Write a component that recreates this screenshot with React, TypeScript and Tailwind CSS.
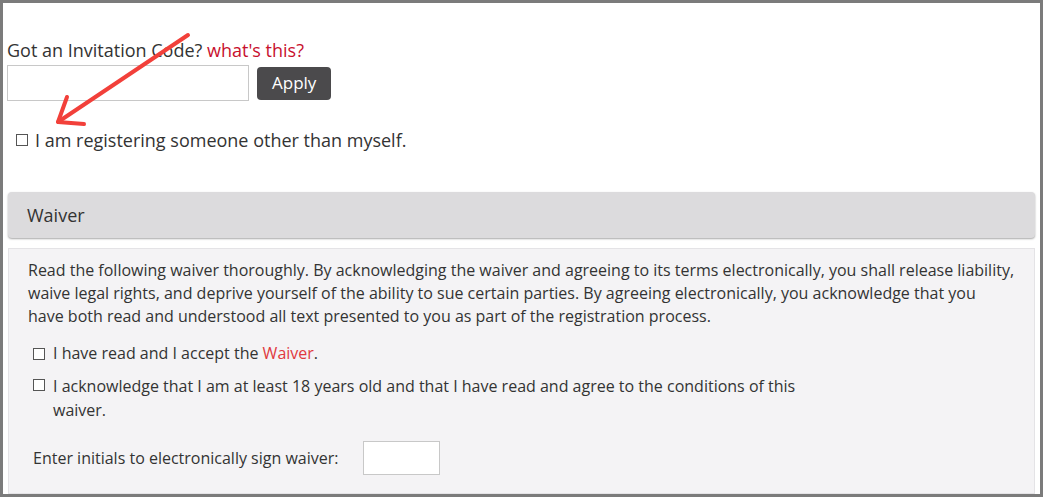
import React from "react";

function Box({ className = "" }: { className?: string }) {
  return <span className={`inline-block w-[12px] h-[12px] border border-[#555] bg-white shrink-0 ${className}`} />;
}

export default function App() {
  return (
    <div className="w-[1045px] h-[501px] bg-white relative" style={{ fontFamily: '"Open Sans", sans-serif' }}>
      <div className="w-[1043px] h-[497px] border-[3px] border-[#7b7b7b] overflow-hidden flex flex-col text-[#333]">
        <div className="pl-[4px] pt-[35px]">
          <div className="text-[18px] leading-[24px]">
            Got an Invitation Code? <span className="text-[#c8102e]">what's this?</span>
          </div>
          <div className="flex items-center gap-[8px] mt-[3px]">
            <input className="w-[242px] h-[36px] border border-[#c8c8c8] bg-white outline-none" />
            <button className="h-[33px] px-[15px] rounded-[4px] bg-[#4b4a4c] text-white text-[17px]">Apply</button>
          </div>
          <label className="flex items-center mt-[27px] pl-[9px] text-[18px] leading-[24px]">
            <Box className="mr-[7px]" />
            I am registering someone other than myself.
          </label>
        </div>

        <div className="mx-[5px] mt-[40px] h-[46px] shrink-0 rounded-[4px] bg-[#dcdbdd] shadow-[0_1px_2px_rgba(0,0,0,0.35)] flex items-center pl-[19px] text-[18px] text-[#333]">
          Waiver
        </div>

        <div className="mx-[5px] mt-[10px] flex-1 bg-[#f4f3f5] border border-[#e4e3e6] pl-[19px] pr-[14px] pt-[10px] text-[16px] text-[#333]">
          <p className="leading-[23px]">
            Read the following waiver thoroughly. By acknowledging the waiver and agreeing to its terms electronically, you shall release liability, waive legal rights, and deprive yourself of the ability to sue certain parties. By agreeing electronically, you acknowledge that you
            <br />
            have both read and understood all text presented to you as part of the registration process.
          </p>
          <label className="flex items-center mt-[14px] pl-[5px] leading-[23px]">
            <Box className="mr-[8px]" />
            <span>
              I have read and I accept the <span className="text-[#e0393e]">Waiver</span>.
            </span>
          </label>
          <label className="flex items-start mt-[9px] pl-[5px] leading-[24px]">
            <Box className="mr-[8px] mt-[5px]" />
            <span className="w-[760px]">
              I acknowledge that I am at least 18 years old and that I have read and agree to the conditions of this waiver.
            </span>
          </label>
          <div className="flex items-center mt-[19px] pl-[5px]">
            <span>Enter initials to electronically sign waiver:</span>
            <input className="ml-[25px] w-[77px] h-[34px] border border-[#c8c8c8] bg-white outline-none" />
          </div>
        </div>
      </div>

      <svg className="absolute left-0 top-0 pointer-events-none" width="1045" height="501">
        <g stroke="#f2403a" strokeWidth="4" strokeLinecap="round" strokeLinejoin="round" fill="none">
          <line x1="188" y1="35" x2="58" y2="122" />
          <polyline points="67,97 58,122 84,124" />
        </g>
      </svg>
    </div>
  );
}
